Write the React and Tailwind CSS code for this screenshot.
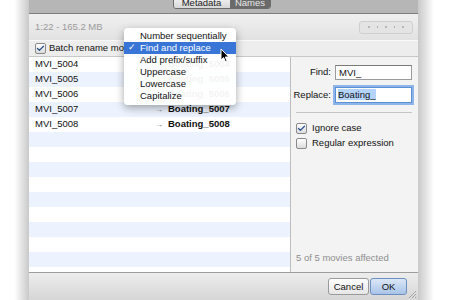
import { Check } from 'lucide-react'

const rows = [
  { name: 'MVI_5004', to: 'Boating_5004' },
  { name: 'MVI_5005', to: 'Boating_5005' },
  { name: 'MVI_5006', to: 'Boating_5006' },
  { name: 'MVI_5007', to: 'Boating_5007' },
  { name: 'MVI_5008', to: 'Boating_5008' },
]

const menu = ['Number sequentially', 'Find and replace', 'Add prefix/suffix', 'Uppercase', 'Lowercase', 'Capitalize']

function Checkbox({ checked }) {
  return (
    <span className="w-[11px] h-[11px] shrink-0 rounded-[2px] border border-[#8a8a8a] bg-gradient-to-b from-white to-[#dcdcdc] flex items-center justify-center">
      {checked && <Check size={11} strokeWidth={3.5} className="text-[#2a4f8f] -mt-[1px]" />}
    </span>
  )
}

export default function App() {
  return (
    <div className="w-[450px] h-[300px] bg-white relative overflow-hidden flex text-[9.5px] text-[#111] whitespace-nowrap" style={{ fontFamily: '"Liberation Sans", Arial, sans-serif' }}>
      {/* shadow left */}
      <div className="w-[29px] h-full bg-gradient-to-r from-white via-white to-[#c9c9c9]" />

      {/* window */}
      <div className="w-[389px] h-full flex flex-col bg-[#ececec]">
        <div className="h-[14px] bg-[#b6b6b6] border-b border-[#7d7d7d] flex justify-center overflow-hidden">
          <div className="flex -mt-[4px] -ml-[4px] h-[13px] rounded-[3px] border border-[#6c6c6c] overflow-hidden text-[9.5px] leading-[12px]">
            <span className="w-[57px] text-center bg-gradient-to-b from-[#f4f4f4] to-[#d8d8d8] text-[#222] border-r border-[#6c6c6c]">Metadata</span>
            <span className="w-[39px] text-center bg-[#6a6a6a] text-[#e8e8e8]">Names</span>
          </div>
        </div>

        <div className="h-[26px] flex items-center justify-between pl-[6px] pr-[5px] bg-gradient-to-b from-[#f0f0f0] to-[#e2e2e2]">
          <span className="text-[#9b9b9b]">1:22 - 165.2 MB</span>
          <div className="w-[54px] h-[13px] rounded-[3px] border border-[#cfcfcf] bg-[#e4e4e4] flex items-center justify-center gap-[7px]">
            {[0, 1, 2, 3, 4].map((i) => (
              <span key={i} className="w-[1.5px] h-[1.5px] rounded-full bg-[#a8a8a8]" />
            ))}
          </div>
        </div>

        <div className="h-[17px] flex items-center gap-[3px] pl-[6px] border-t border-[#f8f8f8] border-b border-b-[#c8c8c8] bg-[#ededed]">
          <Checkbox checked />
          <span>Batch rename movies</span>
        </div>

        <div className="flex-1 flex min-h-0">
          <div className="w-[261px] flex flex-col bg-white">
            {Array.from({ length: 14 }).map((_, i) => {
              const r = rows[i]
              return (
                <div key={i} className={`h-[15px] shrink-0 flex items-center pl-[6px] ${i % 2 ? 'bg-[#edf3fe]' : 'bg-white'}`}>
                  {r && (
                    <>
                      <span className="w-[120px]">{r.name}</span>
                      <span className="text-[#777] text-[8px] w-[13px]">→</span>
                      <span className="font-bold">{r.to}</span>
                    </>
                  )}
                </div>
              )
            })}
          </div>
          <div className="flex-1 border-l border-[#bdbdbd] bg-[#f3f3f3] flex flex-col pl-[4px] pr-[6px] pt-[8px] pb-[7px]">
            <div className="flex items-center h-[15px]">
              <span className="w-[40px] flex justify-end pr-[4px]">Find:</span>
              <div className="flex-1 h-[15px] border border-[#9a9a9a] border-t-[#7a7a7a] bg-white pl-[3px] leading-[13px]">MVI_</div>
            </div>
            <div className="flex items-center h-[16px] mt-[7px]">
              <span className="w-[40px] flex justify-end pr-[4px]">Replace:</span>
              <div className="flex-1 h-[16px] border border-[#5b8fd6] bg-white pl-[2px] leading-[14px] ring-2 ring-[#8db5ea]">
                <span className="bg-[#b5d4fd]">Boating_</span>
              </div>
            </div>
            <div className="h-px bg-[#c4c4c4] mt-[9px] mb-[9px] ml-[1px]" />
            <div className="flex items-center gap-[5px] h-[13px] pl-[1px]">
              <Checkbox checked />
              <span>Ignore case</span>
            </div>
            <div className="flex items-center gap-[5px] h-[13px] mt-[2px] pl-[1px]">
              <Checkbox />
              <span>Regular expression</span>
            </div>
            <div className="flex-1" />
            <span className="text-[#8e8e8e] pl-[1px]">5 of 5 movies affected</span>
          </div>
        </div>

        <div className="h-[28px] border-t border-[#9d9d9d] bg-gradient-to-b from-[#ededed] to-[#d6d6d6] flex items-center justify-end gap-[1px] pr-[11px] relative">
          <button className="w-[41px] h-[17px] rounded-[3px] border border-[#9a9a9a] bg-gradient-to-b from-white to-[#e6e6e6] text-[9.5px] leading-[15px]">Cancel</button>
          <button className="w-[37px] h-[17px] rounded-[3px] border border-[#6d8fbf] bg-gradient-to-b from-[#dbe7f7] to-[#a9c4e8] text-[9.5px] leading-[15px]">OK</button>
          <svg className="absolute right-[2px] bottom-[2px]" width="8" height="8" viewBox="0 0 8 8">
            <path d="M1 8 L8 1 M4 8 L8 4 M7 8 L8 7" stroke="#9a9a9a" strokeWidth="0.8" />
          </svg>
        </div>
      </div>

      {/* shadow right */}
      <div className="flex-1 h-full bg-gradient-to-r from-[#c9c9c9] via-white to-white" />

      {/* popup menu */}
      <div className="absolute left-[124px] top-[28px] w-[112px] h-[77px] rounded-[4px] bg-white/95 shadow-[0_3px_8px_rgba(0,0,0,0.35)] pt-[2px] flex flex-col">
        {menu.map((m, i) => (
          <div key={m} className={`h-[12px] shrink-0 flex items-center ${i === 1 ? 'bg-[#3875d7] text-white' : ''}`}>
            <span className="w-[16px] text-center text-[9px]">{i === 1 ? '✓' : ''}</span>
            <span>{m}</span>
          </div>
        ))}
      </div>

      {/* cursor */}
      <svg className="absolute left-[220px] top-[48px]" width="10" height="15" viewBox="0 0 10 15">
        <path d="M1 1 L1 12 L3.6 9.6 L5.6 14 L7.2 13.3 L5.3 9 L8.8 9 Z" fill="#000" stroke="#fff" strokeWidth="1" />
      </svg>
    </div>
  )
}
